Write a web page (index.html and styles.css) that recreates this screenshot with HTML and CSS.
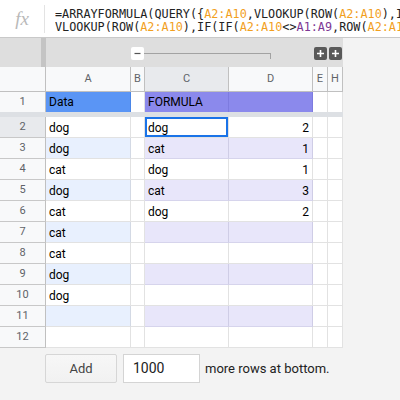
FILE: index.html
```html
<!DOCTYPE html>
<html>
<head>
<meta charset="utf-8">
<link rel="stylesheet" href="styles.css">
</head>
<body>
<div class="fbar">
  <div class="fx">fx</div>
  <div class="formula">
    <div class="fline">=ARRAYFORMULA(QUERY({<span class="r1">A2:A10</span>,VLOOKUP(ROW(<span class="r1">A2:A10</span>),IF</div>
    <div class="fline">VLOOKUP(ROW(<span class="r1">A2:A10</span>),IF(IF(<span class="r1">A2:A10</span>&lt;&gt;<span class="r2">A1:A9</span>,ROW(<span class="r1">A2:A10</span></div>
  </div>
</div>

<div class="sheet">
  <div class="band">
    <div class="handle"></div>
    <div class="gbtn minus"><svg width="13" height="13" viewBox="0 0 13 13"><path d="M3.5 6.5h6" stroke="#555" stroke-width="1.2"/></svg></div>
    <div class="bracket"></div>
    <div class="gbtn plus first"><svg width="13" height="13" viewBox="0 0 13 13"><path d="M6.5 3v7M3 6.5h7" stroke="#fff" stroke-width="1.6"/></svg></div>
    <div class="gbtn plus"><svg width="13" height="13" viewBox="0 0 13 13"><path d="M6.5 3v7M3 6.5h7" stroke="#fff" stroke-width="1.6"/></svg></div>
  </div>

  <div class="grid">
    <div class="hd corner"></div>
    <div class="hd">A</div>
    <div class="hd">B</div>
    <div class="hd sel">C</div>
    <div class="hd">D</div>
    <div class="hd">E</div>
    <div class="hd">H</div>

    <div class="rh r1h">1</div>
    <div class="c top blue">Data</div>
    <div class="c top"></div>
    <div class="c top purple">FORMULA</div>
    <div class="c top purple"></div>
    <div class="c top"></div>
    <div class="c top"></div>

    <div class="freeze"></div>

    <div class="rh sel">2</div>
    <div class="c">dog</div><div class="c"></div><div class="c active">dog</div><div class="c num">2</div><div class="c"></div><div class="c"></div>

    <div class="rh">3</div>
    <div class="c ba">dog</div><div class="c"></div><div class="c lv">cat</div><div class="c num lv">1</div><div class="c"></div><div class="c"></div>

    <div class="rh">4</div>
    <div class="c">cat</div><div class="c"></div><div class="c">dog</div><div class="c num">1</div><div class="c"></div><div class="c"></div>

    <div class="rh">5</div>
    <div class="c ba">dog</div><div class="c"></div><div class="c lv">cat</div><div class="c num lv">3</div><div class="c"></div><div class="c"></div>

    <div class="rh">6</div>
    <div class="c">cat</div><div class="c"></div><div class="c">dog</div><div class="c num">2</div><div class="c"></div><div class="c"></div>

    <div class="rh">7</div>
    <div class="c ba">cat</div><div class="c"></div><div class="c lv"></div><div class="c lv"></div><div class="c"></div><div class="c"></div>

    <div class="rh">8</div>
    <div class="c">cat</div><div class="c"></div><div class="c"></div><div class="c"></div><div class="c"></div><div class="c"></div>

    <div class="rh">9</div>
    <div class="c ba">dog</div><div class="c"></div><div class="c lv"></div><div class="c lv"></div><div class="c"></div><div class="c"></div>

    <div class="rh">10</div>
    <div class="c">dog</div><div class="c"></div><div class="c"></div><div class="c"></div><div class="c"></div><div class="c"></div>

    <div class="rh">11</div>
    <div class="c ba"></div><div class="c"></div><div class="c lv"></div><div class="c lv"></div><div class="c"></div><div class="c"></div>

    <div class="rh">12</div>
    <div class="c"></div><div class="c"></div><div class="c"></div><div class="c"></div><div class="c"></div><div class="c"></div>
  </div>
</div>

<div class="more">
  <div class="add">Add</div>
  <div class="count">1000</div>
  <div class="more-text">more rows at bottom.</div>
</div>
</body>
</html>
```
FILE: styles.css
```css
html, body {
  margin: 0;
  padding: 0;
}
body {
  width: 400px;
  height: 400px;
  overflow: hidden;
  background: #f3f3f3;
  font-family: Roboto, "Liberation Sans", sans-serif;
}

/* formula bar */
.fbar {
  display: flex;
  height: 37px;
  background: #fff;
  border-bottom: 1px solid #c9c9c9;
}
.fx {
  flex: none;
  width: 44px;
  height: 28px;
  margin-top: 5px;
  border-right: 1px solid #e3e3e3;
  display: flex;
  align-items: center;
  justify-content: center;
  font-family: "Liberation Serif", serif;
  font-style: italic;
  font-size: 19px;
  color: #b9b9b9;
}
.formula {
  flex: 1;
  min-width: 0;
  overflow: hidden;
  padding: 8px 0 0 10px;
  font-family: "DejaVu Sans Mono", monospace;
  font-size: 11.8px;
  line-height: 13px;
  color: #222;
}
.fline {
  white-space: pre;
  overflow: hidden;
}
.r1 { color: #f29f1e; }
.r2 { color: #7e3794; }

/* sheet */
.sheet {
  width: 343px;
}
.band {
  display: flex;
  align-items: flex-start;
  height: 29px;
  background: #dedede;
}
.handle {
  flex: none;
  width: 46px;
  height: 29px;
  box-sizing: border-box;
  border-right: 5px solid #c4c4c4;
}
.gbtn {
  flex: none;
  width: 13px;
  height: 13px;
  margin-top: 9px;
  border-radius: 2px;
}
.gbtn svg { display: block; }
.minus {
  margin-left: 85px;
  background: #fff;
}
.bracket {
  flex: none;
  width: 127px;
  height: 6px;
  margin-top: 15px;
  box-sizing: border-box;
  border-top: 1px solid #a2a2a2;
  border-right: 1px solid #a2a2a2;
}
.plus {
  background: #595959;
  margin-left: 2px;
}
.plus.first {
  margin-left: 43px;
}

.grid {
  display: grid;
  grid-template-columns: 46px 85px 14px 84px 84px 15px 15px;
  background: #fff;
}
.grid > div {
  box-sizing: border-box;
  overflow: hidden;
  white-space: nowrap;
}
.hd {
  height: 25px;
  background: #f8f9fa;
  border-right: 1px solid #c0c0c0;
  border-bottom: 1px solid #c0c0c0;
  text-align: center;
  font-size: 11px;
  line-height: 24px;
  color: #5f6368;
}
.hd.sel, .rh.sel {
  background: #e8eaed;
}
.rh {
  height: 21px;
  background: #f8f9fa;
  border-right: 1px solid #c0c0c0;
  border-bottom: 1px solid #c8c8c8;
  text-align: center;
  font-size: 11px;
  line-height: 20px;
  color: #5f6368;
}
.rh.r1h {
  height: 20px;
  border-bottom: none;
}
.c {
  height: 21px;
  padding: 1px 3px 0;
  border-right: 1px solid #e2e2e2;
  border-bottom: 1px solid #e2e2e2;
  font-size: 12px;
  line-height: 20px;
  color: #000;
}
.c.top {
  height: 20px;
  padding-top: 0;
  border-bottom: none;
}
.c.num { text-align: right; }
.blue {
  background: #5a95f5;
  border-right-color: #4a86e8 !important;
}
.purple {
  background: #8b89ec;
  border-right-color: #7d7bdf !important;
}
.ba {
  background: #e8f0fe;
  border-right-color: #d3d9e4 !important;
}
.lv {
  background: #e8e6fa;
  border-right-color: #cfcde6 !important;
  border-bottom-color: #d6d4ec !important;
}
.active {
  box-shadow: inset 0 0 0 2px #1a73e8;
}
.freeze {
  grid-column: 1 / -1;
  height: 5px;
  background: #dde0e4;
}

/* bottom */
.more {
  display: flex;
  align-items: center;
  padding: 6px 0 0 45px;
}
.add {
  flex: none;
  width: 72px;
  height: 29px;
  box-sizing: border-box;
  border: 1px solid #d6d6d6;
  border-radius: 2px;
  background: linear-gradient(#f7f7f7, #f1f1f1);
  text-align: center;
  line-height: 27px;
  font-size: 13px;
  color: #444;
}
.count {
  flex: none;
  width: 77px;
  height: 29px;
  margin-left: 6px;
  box-sizing: border-box;
  border: 1px solid #d4d4d4;
  background: #fff;
  padding-left: 9px;
  line-height: 27px;
  font-size: 14px;
  color: #222;
}
.more-text {
  margin-left: 5px;
  font-size: 13px;
  color: #222;
}
```
